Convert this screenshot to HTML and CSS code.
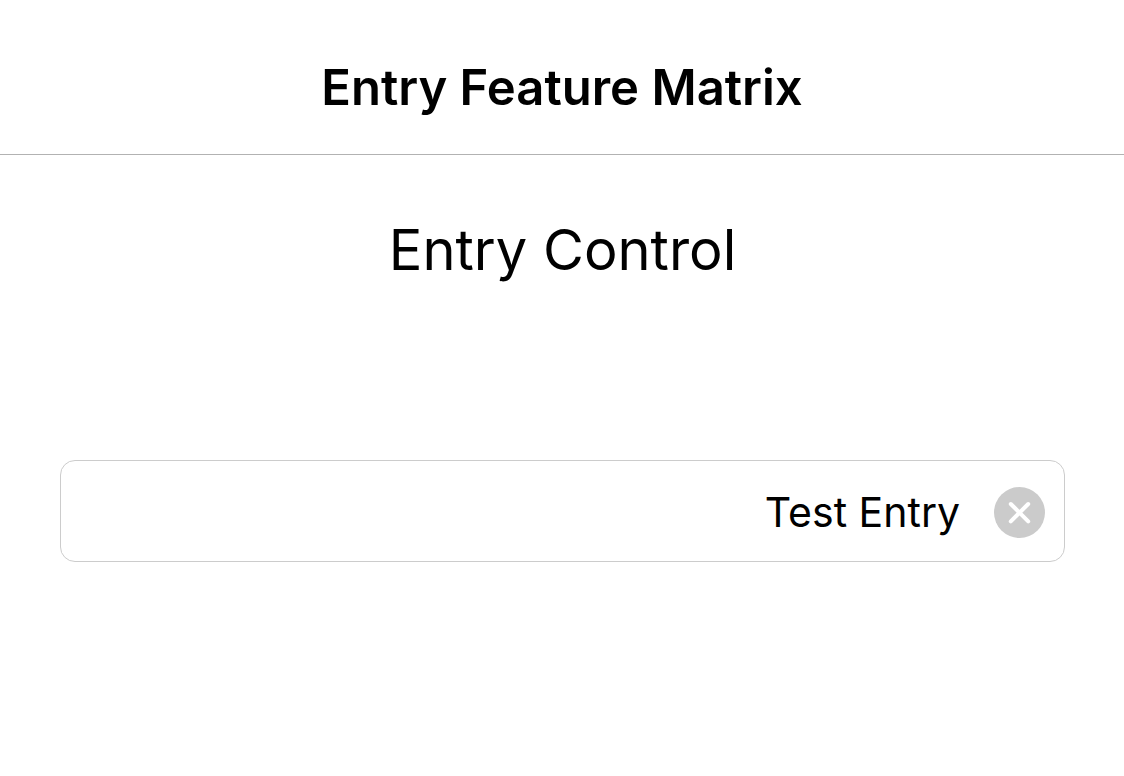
FILE: index.html
```html
<!DOCTYPE html>
<html lang="en">
<head>
<meta charset="utf-8">
<meta name="viewport" content="width=device-width, initial-scale=1">
<title>Entry Feature Matrix</title>
<link rel="stylesheet" href="styles.css">
</head>
<body>
<header class="navbar"><h1 class="navbar-title">Entry Feature Matrix</h1></header>
<main class="content">
  <h2 class="section-title" id="entry-label">Entry Control</h2>
  <div class="entry">
    <input class="entry-input" type="text" value="Test Entry" aria-labelledby="entry-label">
    <button class="entry-clear" type="button" aria-label="Clear text">
      <svg class="clear-icon" viewBox="0 0 51 51" aria-hidden="true">
        <circle cx="25.5" cy="25.5" r="25.5" fill="#cbcbcb"/>
        <path d="M16.8 17 34.2 34.4M34.2 17 16.8 34.4" fill="none" stroke="#fff" stroke-width="4" stroke-linecap="round"/>
      </svg>
    </button>
  </div>
</main>
</body>
</html>
```
FILE: styles.css
```css
* {
  box-sizing: border-box;
}

body {
  margin: 0;
  background: #fff;
  color: #000;
  font-family: Inter, "Liberation Sans", sans-serif;
}

.navbar {
  padding: 56px 24px 34px;
  border-bottom: 1px solid #b2b2b2;
  text-align: center;
}

.navbar-title {
  margin: 0;
  font-size: 49px;
  font-weight: 600;
  line-height: 64px;
}

.content {
  padding: 60px 59px 60px 60px;
}

.section-title {
  margin: 0 0 175px;
  font-size: 56px;
  font-weight: 400;
  line-height: 70px;
  text-align: center;
}

.entry {
  display: flex;
  align-items: center;
  gap: 34px;
  padding: 2px 19px 0 20px;
  border: 1px solid #cccccc;
  border-radius: 15px;
}

.entry-input {
  flex: 1;
  min-width: 0;
  height: 98px;
  padding: 0;
  border: 0;
  outline: 0;
  background: transparent;
  color: inherit;
  font: inherit;
  font-size: 41px;
  text-align: right;
}

.entry-clear {
  flex: none;
  padding: 0;
  border: 0;
  background: transparent;
}

.clear-icon {
  display: block;
  width: 51px;
  height: 51px;
}
```
